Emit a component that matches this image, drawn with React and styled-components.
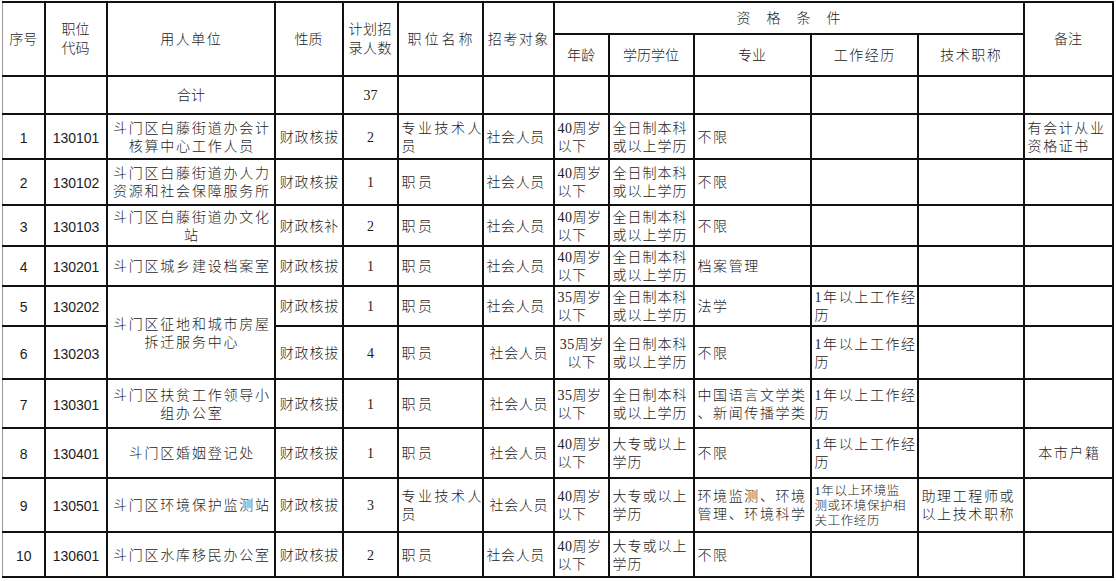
import React from "react";
import styled, { createGlobalStyle } from "styled-components";

const GlobalStyle = createGlobalStyle`
	html, body {
		margin: 0;
		padding: 0;
		background: #fff;
	}
	body {
		font-family: "Liberation Serif", "Noto Sans CJK SC", serif;
		color: #1c1c1c;
	}
`;

const SERIF = `"Liberation Serif", "Noto Sans CJK SC", serif`;
const SANS = `"Liberation Sans", "Noto Sans CJK SC", sans-serif`;

// column widths taken from the grid lines of the sheet
const columns = [42, 62, 168, 68, 55, 85, 71, 55, 85, 117, 107, 106, 89];

const rows = [
	{
		no: "1",
		code: "130101",
		h: 45,
		unit: "斗门区白藤街道办会计\n核算中心工作人员",
		nature: "财政核拔",
		count: "2",
		title: "专业技术人\n员",
		age: "40周岁\n以下",
		edu: "全日制本科\n或以上学历",
		major: "不限",
		note: "有会计从业\n资格证书",
	},
	{
		no: "2",
		code: "130102",
		h: 46,
		unit: "斗门区白藤街道办人力\n资源和社会保障服务所",
		nature: "财政核拔",
		count: "1",
		title: "职员",
		age: "40周岁\n以下",
		edu: "全日制本科\n或以上学历",
		major: "不限",
	},
	{
		no: "3",
		code: "130103",
		h: 41,
		unit: "斗门区白藤街道办文化\n站",
		nature: "财政核补",
		count: "2",
		title: "职员",
		age: "40周岁\n以下",
		edu: "全日制本科\n或以上学历",
		major: "不限",
	},
	{
		no: "4",
		code: "130201",
		h: 40,
		unit: "斗门区城乡建设档案室",
		nature: "财政核拔",
		count: "1",
		title: "职员",
		age: "40周岁\n以下",
		edu: "全日制本科\n或以上学历",
		major: "档案管理",
	},
	{
		no: "5",
		code: "130202",
		h: 40,
		unit: "斗门区征地和城市房屋\n拆迁服务中心",
		unitSpan: 2,
		nature: "财政核拔",
		count: "1",
		title: "职员",
		age: "35周岁\n以下",
		edu: "全日制本科\n或以上学历",
		major: "法学",
		exp: "1年以上工作经\n历",
	},
	{
		no: "6",
		code: "130203",
		h: 53,
		unit: null,
		nature: "财政核拔",
		count: "4",
		title: "职员",
		targetShift: true,
		age: "35周岁\n以下",
		ageCenter: true,
		edu: "全日制本科\n或以上学历",
		major: "不限",
		exp: "1年以上工作经\n历",
	},
	{
		no: "7",
		code: "130301",
		h: 49,
		unit: "斗门区扶贫工作领导小\n组办公室",
		nature: "财政核拔",
		count: "1",
		title: "职员",
		targetShift: true,
		age: "35周岁\n以下",
		edu: "全日制本科\n或以上学历",
		major: "中国语言文学类\n、新闻传播学类",
		exp: "1年以上工作经\n历",
	},
	{
		no: "8",
		code: "130401",
		h: 50,
		unit: "斗门区婚姻登记处",
		nature: "财政核拔",
		count: "1",
		title: "职员",
		targetShift: true,
		age: "40周岁\n以下",
		edu: "大专或以上\n学历",
		major: "不限",
		exp: "1年以上工作经\n历",
		note: "本市户籍",
		noteCenter: true,
	},
	{
		no: "9",
		code: "130501",
		h: 54,
		unit: "斗门区环境保护监测站",
		nature: "财政核拔",
		count: "3",
		title: "专业技术人\n员",
		targetShift: true,
		age: "40周岁\n以下",
		edu: "大专或以上\n学历",
		major: "环境监测、环境\n管理、环境科学",
		exp: "1年以上环境监\n测或环境保护相\n关工作经历",
		expSmall: true,
		tech: "助理工程师或\n以上技术职称",
	},
	{
		no: "10",
		code: "130601",
		h: 45,
		unit: "斗门区水库移民办公室",
		nature: "财政核拔",
		count: "2",
		title: "职员",
		age: "40周岁\n以下",
		edu: "大专或以上\n学历",
		major: "不限",
	},
];

// border-collapse adds the line width to each row, so take it off here
const BORDER = 2;
// text sits a little below the middle of each cell
const NUDGE = 2;

const Lines = ({ text }) =>
	text
		? text.split("\n").map((line, i) => (
				<React.Fragment key={i}>
					{i > 0 && <br />}
					{line}
				</React.Fragment>
		  ))
		: null;

const App = () => (
	<>
		<GlobalStyle />
		<Page>
			<Sheet>
				<colgroup>
					{columns.map((w, i) => (
						<col key={i} style={{ width: w }} />
					))}
				</colgroup>
				<thead>
					<tr>
						<Head rowSpan={2} $h={32}>序号</Head>
						<Head rowSpan={2} $h={32}>
							职位
							<br />
							代码
						</Head>
						<Head rowSpan={2} $h={32} $ls={1.5}>用人单位</Head>
						<Head rowSpan={2} $h={32}>性质</Head>
						<Head rowSpan={2} $h={32} $ls={0.5}>
							计划招
							<br />
							录人数
						</Head>
						<Head rowSpan={2} $h={32} $ls={3}>职位名称</Head>
						<Head rowSpan={2} $h={32} $ls={1.5}>招考对象</Head>
						<Head colSpan={5} $h={32} $ls={16}>资格条件</Head>
						<Head rowSpan={2} $h={32}>备注</Head>
					</tr>
					<tr>
						<Head $h={42}>年龄</Head>
						<Head $h={42}>学历学位</Head>
						<Head $h={42}>专业</Head>
						<Head $h={42} $ls={1.5}>工作经历</Head>
						<Head $h={42} $ls={1.5}>技术职称</Head>
					</tr>
				</thead>
				<tbody>
					<tr>
						<Cell $h={38} />
						<Cell />
						<Cell $align="center">合计</Cell>
						<Cell />
						<Cell $align="center">37</Cell>
						<Cell />
						<Cell />
						<Cell />
						<Cell />
						<Cell />
						<Cell />
						<Cell />
						<Cell />
					</tr>
					{rows.map((r) => (
						<tr key={r.code}>
							<Cell $h={r.h} $align="center" $sans>
								{r.no}
							</Cell>
							<Cell $align="center" $sans>
								{r.code}
							</Cell>
							{r.unit !== null && (
								<Cell
									rowSpan={r.unitSpan || 1}
									$align="center"
									$ls={1.8}
								>
									<Lines text={r.unit} />
								</Cell>
							)}
							<Cell $align="center" $ls={0.8}>
								{r.nature}
							</Cell>
							<Cell $align="center">{r.count}</Cell>
							<Cell $ls={2.5}>
								<Lines text={r.title} />
							</Cell>
							<Cell $align={r.targetShift ? "center" : "left"} $ls={0.6}>
								社会人员
							</Cell>
							<Cell $align={r.ageCenter ? "center" : "left"} $ls={0.5}>
								<Lines text={r.age} />
							</Cell>
							<Cell $ls={1}>
								<Lines text={r.edu} />
							</Cell>
							<Cell $ls={1.6}>
								<Lines text={r.major} />
							</Cell>
							<Cell $ls={r.expSmall ? 0.6 : 1.6} $small={r.expSmall}>
								<Lines text={r.exp} />
							</Cell>
							<Cell $ls={1.6}>
								<Lines text={r.tech} />
							</Cell>
							<Cell $align={r.noteCenter ? "center" : "left"} $ls={1.6}>
								<Lines text={r.note} />
							</Cell>
						</tr>
					))}
				</tbody>
			</Sheet>
		</Page>
	</>
);

export default App;

// page holding the sheet
const Page = styled.div`
	padding: 1px 0 0 2px;
	width: 1116px;
	height: 581px;
	box-sizing: border-box;
	overflow: hidden;
`;

// the spreadsheet grid
const Sheet = styled.table`
	border-collapse: collapse;
	table-layout: fixed;
	width: 1110px;
	border-left: 1px solid #9a9a9a;
`;

// header cell of the grid; left padding evens out the trailing letter-spacing
const Head = styled.th`
	height: ${(p) => p.$h - BORDER}px;
	padding: 0 0 0 ${(p) => p.$ls || 0}px;
	border: ${BORDER}px solid #111;
	font-family: ${SERIF};
	font-size: 14px;
	font-weight: 300;
	line-height: 19px;
	letter-spacing: ${(p) => p.$ls || 0}px;
	text-align: center;
	vertical-align: middle;
	color: #1c1c1c;
	white-space: nowrap;
	&:first-child {
		border-left: 1px solid #9a9a9a;
	}
`;

// body cell of the grid
const Cell = styled.td`
	height: ${(p) => (p.$h ? `${p.$h - BORDER - NUDGE}px` : "auto")};
	padding: ${NUDGE}px 2px 0
		${(p) => (p.$align === "center" ? 3 + (p.$ls || 0) : 3)}px;
	border: ${BORDER}px solid #111;
	font-family: ${(p) => (p.$sans ? SANS : SERIF)};
	font-size: ${(p) => (p.$small ? 12.5 : 14)}px;
	font-weight: 300;
	line-height: ${(p) => (p.$small ? 15 : 18)}px;
	letter-spacing: ${(p) => p.$ls || 0}px;
	text-align: ${(p) => p.$align || "left"};
	vertical-align: middle;
	color: #1c1c1c;
	white-space: nowrap;
	overflow: hidden;
	&:first-child {
		border-left: 1px solid #9a9a9a;
	}
`;
